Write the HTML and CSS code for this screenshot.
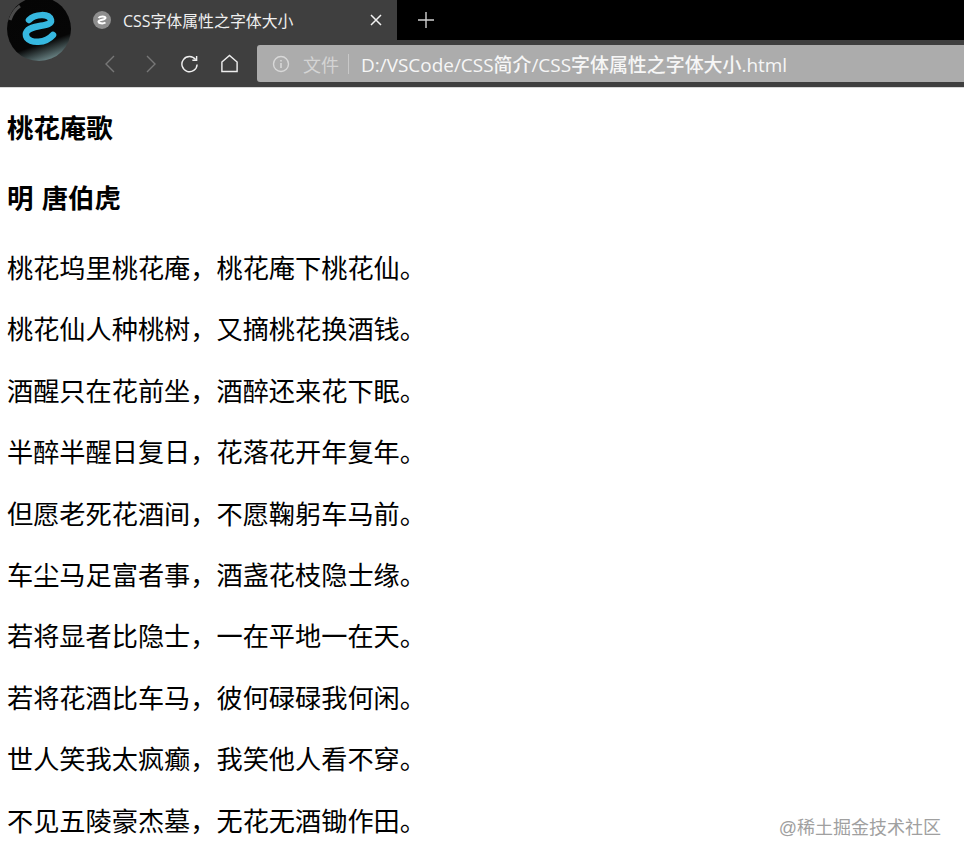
FILE: index.html
```html
<!DOCTYPE html>
<html lang="zh">
<head>
    <meta charset="UTF-8">
    <meta name="viewport" content="width=device-width, initial-scale=1.0">
    <title>CSS字体属性之字体大小</title>
    <link rel="stylesheet" href="styles.css">
</head>
<body>
    <header class="browser">
        <!-- logo sopra la barra -->
        <svg class="logo" width="64" height="62" viewBox="0 0 64 62">
            <defs>
                <linearGradient id="ball" x1="0.3" y1="0" x2="0.65" y2="1">
                    <stop offset="0" stop-color="#050505"/>
                    <stop offset="0.72" stop-color="#060606"/>
                    <stop offset="1" stop-color="#6f8a8c"/>
                </linearGradient>
            </defs>
            <circle cx="32" cy="29" r="32" fill="url(#ball)"/>
            <path d="M3 20 Q6 11 13 6" fill="none" stroke="#4a4a4a" stroke-width="3"/>
            <path d="M22 20 C28 14 42 13 44 20 C45 25 36 25 28 27 C20 29 17 33 20 38 C24 43 38 44 46 35" fill="none" stroke="#36b8e0" stroke-width="6.5" stroke-linecap="round"/>
        </svg>
        <div class="tabstrip">
            <div class="tab">
                <span class="favicon">
                    <svg width="14" height="14" viewBox="0 0 14 14"><path d="M3.5 5 C5 3 10.5 3 10.5 5 C10.5 7 4 6.5 3.5 8.5 C3.5 10.5 8 11 10.5 9.5" fill="none" stroke="#fff" stroke-width="2"/></svg>
                </span>
                <span class="tab-title">CSS字体属性之字体大小</span>
                <svg class="tab-close" width="14" height="14" viewBox="0 0 14 14"><path d="M2 2 L12 12 M12 2 L2 12" stroke="#f2f2f2" stroke-width="1.5"/></svg>
            </div>
            <div class="tab-new">
                <svg width="18" height="18" viewBox="0 0 18 18"><path d="M9 1 V17 M1 9 H17" stroke="#d0d0d0" stroke-width="1.4"/></svg>
            </div>
        </div>
        <div class="toolbar">
            <svg class="nav-icon" width="12" height="18" viewBox="0 0 12 18"><path d="M10 1 L2 9 L10 17" fill="none" stroke="#777" stroke-width="1.4"/></svg>
            <svg class="nav-icon" width="12" height="18" viewBox="0 0 12 18"><path d="M2 1 L10 9 L2 17" fill="none" stroke="#777" stroke-width="1.4"/></svg>
            <svg class="nav-icon" width="19" height="19" viewBox="0 0 20 20"><path d="M16.5 6 A8 8 0 1 0 18 11" fill="none" stroke="#eee" stroke-width="1.5"/><path d="M13 6.5 H17.5 V2" fill="none" stroke="#eee" stroke-width="1.5"/></svg>
            <svg class="nav-icon" width="19" height="19" viewBox="0 0 20 20"><path d="M2 8.5 L10 1.5 L18 8.5 V18.5 H2 Z" fill="none" stroke="#eee" stroke-width="1.5"/></svg>
            <div class="address">
                <svg width="18" height="18" viewBox="0 0 18 18"><circle cx="9" cy="9" r="7.5" fill="none" stroke="#d8d8d8" stroke-width="1.4"/><path d="M9 8 V13 M9 5 V6.6" stroke="#d8d8d8" stroke-width="1.6"/></svg>
                <span class="addr-label">文件</span>
                <span class="addr-sep"></span>
                <span class="addr-url">D:/VSCode/CSS简介/CSS字体属性之字体大小.html</span>
            </div>
        </div>
    </header>

    <main class="poem">
        <h3>桃花庵歌</h3>
        <h3>明 唐伯虎</h3>
        <p>桃花坞里桃花庵，桃花庵下桃花仙。</p>
        <p>桃花仙人种桃树，又摘桃花换酒钱。</p>
        <p>酒醒只在花前坐，酒醉还来花下眠。</p>
        <p>半醉半醒日复日，花落花开年复年。</p>
        <p>但愿老死花酒间，不愿鞠躬车马前。</p>
        <p>车尘马足富者事，酒盏花枝隐士缘。</p>
        <p>若将显者比隐士，一在平地一在天。</p>
        <p>若将花酒比车马，彼何碌碌我何闲。</p>
        <p>世人笑我太疯癫，我笑他人看不穿。</p>
        <p>不见五陵豪杰墓，无花无酒锄作田。</p>
    </main>

    <div class="watermark">@稀土掘金技术社区</div>
</body>
</html>
```

FILE: styles.css
```css
html, body {
    height: 860px;
    overflow: hidden;
}

body {
    margin: 0;
    background: #fff;
    color: #000;
    font-family: "Liberation Sans", "Noto Sans CJK SC", sans-serif;
    position: relative;
}

/* Barra del browser */
.browser {
    background: #3f3f3f;
    height: 88px;
    border-bottom: 1px solid #d8d8d8;
    box-sizing: border-box;
    position: relative;
}

.logo {
    position: absolute;
    left: 7px;
    top: 0;
}

.tabstrip {
    display: flex;
    height: 40px;
}

.tab {
    width: 397px;
    display: flex;
    align-items: center;
    padding-left: 93px;
    padding-right: 14px;
    box-sizing: border-box;
}

.favicon {
    width: 18px;
    height: 18px;
    border-radius: 50%;
    background: #8e8e8e;
    display: flex;
    align-items: center;
    justify-content: center;
}

.tab-title {
    margin-left: 12px;
    font-family: "Open Sans", "Noto Sans CJK SC", sans-serif;
    font-size: 15.9px;
    color: #efefef;
    flex: 1;
}

.tab-new {
    flex: 1;
    background: #000;
    padding-left: 20px;
    display: flex;
    align-items: center;
}

.toolbar {
    display: flex;
    align-items: center;
    height: 47px;
    box-sizing: border-box;
    padding-left: 104px;
}

.nav-icon:nth-child(2) {
    margin-left: 29px;
}

.nav-icon:nth-child(3) {
    margin-left: 23px;
}

.nav-icon:nth-child(4) {
    margin-left: 21px;
}

.address {
    flex: 1;
    height: 37px;
    margin-left: 18px;
    background: #acacac;
    border-radius: 3px 0 0 3px;
    display: flex;
    align-items: center;
    padding-left: 15px;
}

.addr-label {
    margin-left: 13px;
    font-size: 18px;
    color: #d4d4d4;
}

.addr-sep {
    width: 1px;
    height: 20px;
    margin: 0 12px 0 9px;
    background: #c8c8c8;
}

.addr-url {
    font-family: "Open Sans", "Noto Sans CJK SC", sans-serif;
    font-size: 18.95px;
    color: #f6f6f6;
    font-weight: 500;
}

/* Poesia */
.poem {
    padding: 0 7px;
}

.poem h3 {
    font-size: 26.4px;
    font-weight: bold;
    word-spacing: 1px;
    line-height: 36px;
    margin: 0 0 34px;
}

.poem h3:first-child {
    margin-top: 23px;
}

.poem p {
    font-size: 26.2px;
    line-height: 36px;
    margin: 0 0 25.4px;
}

.watermark {
    position: absolute;
    right: 23px;
    bottom: 21px;
    font-size: 18px;
    color: #a0a0a0;
}
```
